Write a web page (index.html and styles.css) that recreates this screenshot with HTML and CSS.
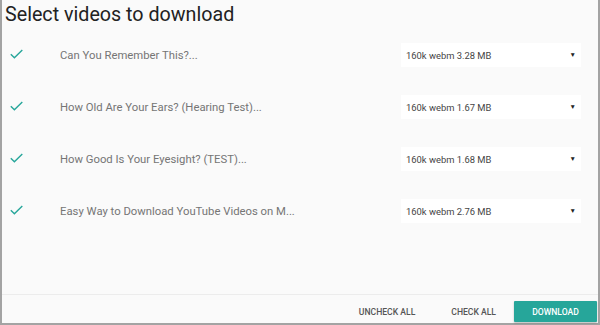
FILE: index.html
```html
<!DOCTYPE html>
<html>
<head>
<meta charset="utf-8">
<link rel="stylesheet" href="styles.css">
</head>
<body>
<div class="dialog">
  <h1 class="title">Select videos to download</h1>
  <div class="list">
    <div class="row">
      <svg class="check" viewBox="0 0 13 10" width="13" height="10"><path d="M0.8 5.2 L4.4 8.8 L12.3 0.9" fill="none" stroke="#26a69a" stroke-width="1.4"/></svg>
      <span class="name">Can You Remember This?...</span>
      <div class="select"><span>160k webm 3.28 MB</span><span class="arrow">▼</span></div>
    </div>
    <div class="row">
      <svg class="check" viewBox="0 0 13 10" width="13" height="10"><path d="M0.8 5.2 L4.4 8.8 L12.3 0.9" fill="none" stroke="#26a69a" stroke-width="1.4"/></svg>
      <span class="name">How Old Are Your Ears? (Hearing Test)...</span>
      <div class="select"><span>160k webm 1.67 MB</span><span class="arrow">▼</span></div>
    </div>
    <div class="row">
      <svg class="check" viewBox="0 0 13 10" width="13" height="10"><path d="M0.8 5.2 L4.4 8.8 L12.3 0.9" fill="none" stroke="#26a69a" stroke-width="1.4"/></svg>
      <span class="name">How Good Is Your Eyesight? (TEST)...</span>
      <div class="select"><span>160k webm 1.68 MB</span><span class="arrow">▼</span></div>
    </div>
    <div class="row">
      <svg class="check" viewBox="0 0 13 10" width="13" height="10"><path d="M0.8 5.2 L4.4 8.8 L12.3 0.9" fill="none" stroke="#26a69a" stroke-width="1.4"/></svg>
      <span class="name">Easy Way to Download YouTube Videos on M...</span>
      <div class="select"><span>160k webm 2.76 MB</span><span class="arrow">▼</span></div>
    </div>
  </div>
  <div class="footer">
    <button class="btn flat">UNCHECK ALL</button>
    <button class="btn flat">CHECK ALL</button>
    <button class="btn primary">DOWNLOAD</button>
  </div>
</div>
</body>
</html>
```
FILE: styles.css
```css
html, body {
  margin: 0;
  padding: 0;
  background: #fafafa;
}
.dialog {
  box-sizing: border-box;
  width: 600px;
  height: 325px;
  background: #fafafa;
  border-left: 2px solid #a3a3a3;
  border-right: 2px solid #a3a3a3;
  border-bottom: 2px solid #a3a3a3;
  display: flex;
  flex-direction: column;
  font-family: Roboto, "Liberation Sans", sans-serif;
}
.title {
  margin: 0;
  padding: 3px 0 0 3px;
  height: 26px;
  font-size: 19.7px;
  font-weight: 400;
  line-height: 24px;
  color: #222;
}
.list {
  flex: 1;
}
.row {
  height: 52px;
  display: flex;
  align-items: center;
}
.check {
  margin-left: 8px;
  margin-top: -2px;
  flex: none;
}
.name {
  margin-left: 37px;
  font-size: 11.3px;
  color: #757575;
  flex: 1;
}
.select {
  width: 180px;
  height: 24px;
  margin-right: 17px;
  background: #fff;
  display: flex;
  align-items: center;
  justify-content: space-between;
  box-sizing: border-box;
  padding: 0 5px 0 5px;
  font-size: 9.4px;
  color: #444;
}
.arrow {
  font-size: 6.5px;
  color: #222;
}
.footer {
  border-top: 1px solid #ececec;
  display: flex;
  justify-content: flex-end;
  align-items: flex-start;
  padding-top: 6px;
  box-sizing: border-box;
  height: 29px;
  padding-right: 1px;
}
.btn {
  font-family: Roboto, "Liberation Sans", sans-serif;
  font-size: 8.6px;
  font-weight: 500;
  border: none;
  height: 21px;
  padding: 0;
  cursor: pointer;
}
.flat {
  background: transparent;
  color: #555;
  margin-right: 36px;
}
.flat + .flat {
  margin-right: 18px;
}
.primary {
  width: 83px;
  background: #26a69a;
  color: #fff;
  border-radius: 1px;
  box-shadow: 0 1px 2px rgba(0,0,0,0.25);
}
```
